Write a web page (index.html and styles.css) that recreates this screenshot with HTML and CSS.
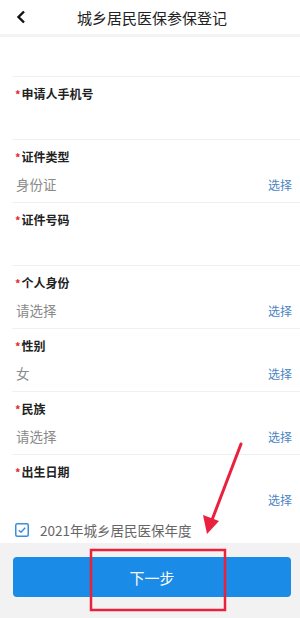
FILE: index.html
```html
<!DOCTYPE html>
<html lang="zh">
<head>
    <meta charset="UTF-8">
    <title>城乡居民医保参保登记</title>
    <link rel="stylesheet" href="styles.css">
</head>
<body>
<div class="page">
    <div class="header">
        <span class="back">
            <svg width="10" height="14" viewBox="0 0 10 14"><path d="M8 1.5 L2.5 7 L8 12.5" fill="none" stroke="#111" stroke-width="2.4"/></svg>
        </span>
        <h1>城乡居民医保参保登记</h1>
    </div>
    <div class="blank"></div>
    <div class="form">
        <div class="field">
            <div class="label"><i>*</i>申请人手机号</div>
            <div class="value"></div>
        </div>
        <div class="field">
            <div class="label"><i>*</i>证件类型</div>
            <div class="value"><span>身份证</span><a>选择</a></div>
        </div>
        <div class="field">
            <div class="label"><i>*</i>证件号码</div>
            <div class="value"></div>
        </div>
        <div class="field">
            <div class="label"><i>*</i>个人身份</div>
            <div class="value"><span>请选择</span><a>选择</a></div>
        </div>
        <div class="field">
            <div class="label"><i>*</i>性别</div>
            <div class="value"><span>女</span><a>选择</a></div>
        </div>
        <div class="field">
            <div class="label"><i>*</i>民族</div>
            <div class="value"><span>请选择</span><a>选择</a></div>
        </div>
        <div class="field last">
            <div class="label"><i>*</i>出生日期</div>
            <div class="value"><span></span><a>选择</a></div>
        </div>
    </div>
    <div class="year">
        <span class="check">
            <svg width="14" height="14" viewBox="0 0 14 14"><rect x="0.75" y="0.75" width="12.5" height="12.5" rx="1.5" fill="#fff" stroke="#3b8fd9" stroke-width="1.5"/><path d="M3.8 7.2 L6 9.3 L10.2 4.8" fill="none" stroke="#3b8fd9" stroke-width="1.5"/></svg>
        </span>
        <span>2021年城乡居民医保年度</span>
    </div>
    <div class="footer">
        <button class="next">下一步</button>
    </div>

    <!-- 红色标注 -->
    <svg class="mark" width="300" height="618" viewBox="0 0 300 618">
        <line x1="241" y1="444" x2="212" y2="520" stroke="#e9213d" stroke-width="3" stroke-linecap="round"/>
        <polygon points="207,534 203,515 219,521" fill="#e9213d"/>
        <rect x="91" y="550" width="134" height="60" fill="none" stroke="#e9213d" stroke-width="2.5"/>
    </svg>
</div>
</body>
</html>
```

FILE: styles.css
```css
* {
    margin: 0;
    padding: 0;
    box-sizing: border-box;
}

body {
    font-family: "Noto Sans CJK SC", "Noto Sans", sans-serif;
    background: #fff;
}

.page {
    width: 300px;
    height: 618px;
    position: relative;
    overflow: hidden;
    display: flex;
    flex-direction: column;
}

.header {
    height: 37px;
    display: flex;
    align-items: center;
    border-bottom: 3px solid #f3f3f3;
}

.back {
    width: 44px;
    padding-left: 16px;
    display: flex;
    align-items: center;
}

.header h1 {
    font-size: 15px;
    font-weight: normal;
    color: #222;
    flex: 1;
    text-align: center;
    padding-right: 40px;
}

.blank {
    height: 40px;
    margin-left: 12px;
    border-bottom: 1px solid #f0f0f0;
}

.field {
    height: 63px;
    margin-left: 12px;
    padding: 7px 8px 0 3px;
    border-bottom: 1px solid #f0f0f0;
}

.field.last {
    height: 62px;
    border-bottom: none;
}

.label {
    height: 20px;
    line-height: 20px;
    font-size: 12px;
    font-weight: bold;
    color: #222;
}

.label i {
    font-style: normal;
    color: #e02a2a;
    font-size: 11px;
    margin-right: 1px;
}

.value {
    height: 28px;
    margin-top: 3px;
    display: flex;
    align-items: center;
    justify-content: space-between;
    padding-left: 1px;
}

.value span {
    font-size: 13.5px;
    color: #8a8a8a;
}

.value a {
    font-size: 12px;
    color: #4a84c4;
}

.year {
    height: 26px;
    display: flex;
    align-items: center;
    padding-left: 15px;
    font-size: 13.5px;
    color: #666;
}

.check {
    width: 25px;
    display: flex;
}

.footer {
    flex: 1;
    background: #f2f2f2;
    padding: 14px 9px 0 13px;
}

.next {
    width: 100%;
    height: 40px;
    border: none;
    border-radius: 4px;
    background: #1a8be6;
    color: #fff;
    font-family: "Noto Sans CJK SC", sans-serif;
    font-size: 15px;
}

.mark {
    position: absolute;
    left: 0;
    top: 0;
    pointer-events: none;
}
```
